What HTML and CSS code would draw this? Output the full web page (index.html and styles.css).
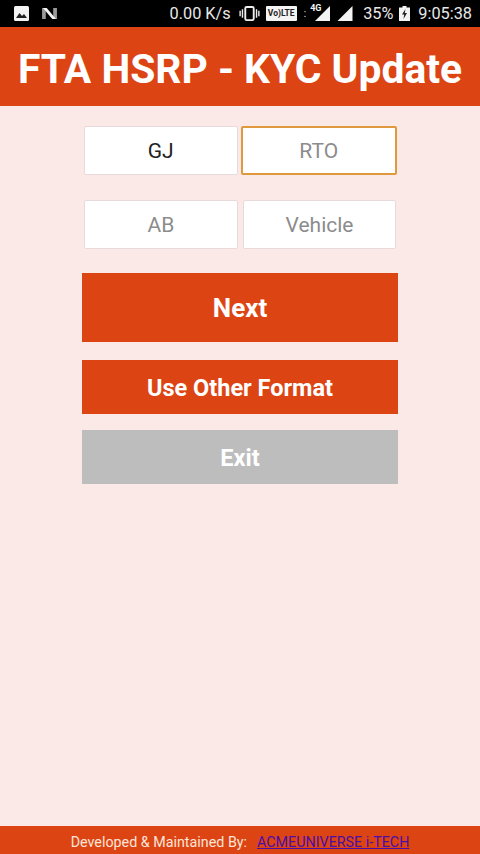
FILE: index.html
```html
<!DOCTYPE html>
<html lang="en">
<head>
<meta charset="utf-8">
<title>FTA HSRP - KYC Update</title>
<link rel="stylesheet" href="styles.css">
</head>
<body>
<div class="status">
  <div class="status-left">
    <svg class="ic-img" viewBox="0 0 15 15"><rect width="15" height="15" rx="1.500" fill="#f4f4f4"/><path d="M2 12l3.500-5 2.500 3 2-2 3 4z" fill="#222"/></svg>
    <svg class="ic-n" viewBox="0 0 16 14"><path d="M0 1h4v12H0zM12 1h4v12h-4z" fill="#9a9a9a"/><path d="M1 1h4l10 12h-4z" fill="#f4f4f4"/></svg>
  </div>
  <div class="status-right">
    <span class="speed">0.00 K/s</span>
    <svg class="ic-vib" viewBox="0 0 22 16"><rect x="6.500" y="1" width="9" height="14" rx="1.500" fill="none" stroke="#eee" stroke-width="2"/><path d="M1 5v6M3.500 3.500v9M18.500 3.500v9M21 5v6" stroke="#eee" stroke-width="1.500"/></svg>
    <span class="volte">Vo<i>)</i>LTE</span>
    <span class="dots">:</span>
    <span class="sig-wrap"><span class="fourg">4G</span><svg class="ic-sig" viewBox="0 0 16 16"><path d="M16 0v16H0z" fill="#f4f4f4"/></svg></span>
    <svg class="ic-sig2" viewBox="0 0 16 16"><path d="M16 0v16H0z" fill="#f4f4f4"/></svg>
    <span class="batt-text">35%</span>
    <svg class="ic-batt" viewBox="0 0 11 15"><path d="M3.500 0h4v1.500H11V15H0V1.500h3.500z" fill="#f4f4f4"/><path d="M6.500 3L3 8.500h2.200L4.500 13l3.500-6H5.800z" fill="#222"/></svg>
    <span class="clock">9:05:38</span>
  </div>
</div>
<header class="appbar">FTA HSRP - KYC Update</header>
<main class="content">
  <div class="row row-first">
    <div class="field field-value">GJ</div>
    <div class="field field-focus">RTO</div>
  </div>
  <div class="row row-second">
    <div class="field field-low">AB</div>
    <div class="field field-low field-narrow">Vehicle</div>
  </div>
  <button class="btn btn-next">Next</button>
  <button class="btn btn-other">Use Other Format</button>
  <button class="btn btn-exit">Exit</button>
</main>
<footer class="footer">
  <span class="dev">Developed &amp; Maintained By:</span>
  <a class="link" href="#">ACMEUNIVERSE i-TECH</a>
</footer>
</body>
</html>
```
FILE: styles.css
```css
* { box-sizing: border-box; }
html, body { margin: 0; padding: 0; }
body {
  width: 480px;
  height: 854px;
  display: flex;
  flex-direction: column;
  background: #fbe9e7;
  font-family: Roboto, "Liberation Sans", sans-serif;
  overflow: hidden;
}
.status {
  height: 27px;
  flex: none;
  background: #000;
  color: #e8e8e8;
  display: flex;
  justify-content: space-between;
  align-items: center;
  padding: 0 8px 0 14px;
  font-size: 16.300px;
}
.status-left { display: flex; align-items: center; gap: 12px; }
.ic-img { width: 15px; height: 15px; }
.ic-n { width: 17px; height: 13px; }
.status-right { display: flex; align-items: center; }
.speed { margin-right: 8px; }
.ic-vib { width: 21px; height: 15px; margin-right: 6px; }
.volte {
  background: #f4f4f4;
  color: #222;
  font-size: 8.500px;
  font-weight: 700;
  width: 31px;
  height: 15px;
  line-height: 15px;
  text-align: center;
  border-radius: 1px;
  white-space: nowrap;
}
.volte i { font-style: normal; }
.dots { font-size: 10px; margin: 0 8px 0 7px; }
.sig-wrap { position: relative; width: 17px; height: 15px; margin-right: 6px; }
.fourg {
  position: absolute;
  left: -4px;
  top: -3px;
  font-size: 9px;
  font-weight: 700;
  color: #f4f4f4;
  line-height: 10px;
}
.ic-sig { width: 17px; height: 15px; display: block; }
.ic-sig2 { width: 16px; height: 15px; margin-right: 10px; }
.batt-text { margin-right: 6px; }
.ic-batt { width: 11px; height: 15px; margin-right: 8px; }
.appbar {
  height: 79px;
  flex: none;
  background: #dd4414;
  color: #fff;
  font-size: 40.800px;
  font-weight: 700;
  line-height: 85px;
  text-align: center;
  white-space: nowrap;
}
.content {
  flex: 1;
  display: flex;
  flex-direction: column;
  padding: 0 82px;
}
.row { display: flex; justify-content: space-between; padding: 0 1px 0 2px; }
.row-first { margin-top: 20px; }
.row-second { margin-top: 25px; }
.field {
  width: 154px;
  height: 49px;
  background: #fff;
  border: 1px solid #e8dada;
  border-radius: 2px;
  color: #8c8c8c;
  font-size: 21px;
  display: flex;
  align-items: center;
  justify-content: center;
}
.field-value { color: #222; }
.field-low { padding-top: 1px; }
.field-focus {
  width: 157px;
  margin-left: 3px;
  border: 2px solid #e0993f;
}
.field-narrow { width: 153px; margin-right: 1px; }
.btn {
  display: block;
  width: 316px;
  border: 0;
  border-radius: 0;
  padding: 1px 0 0;
  background: #dd4414;
  color: #fff;
  font-family: inherit;
  font-weight: 700;
  text-align: center;
}
.btn-next { height: 69px; margin-top: 24px; font-size: 26px; }
.btn-other { height: 54px; margin-top: 18px; font-size: 23.500px; }
.btn-exit { height: 54px; margin-top: 16px; font-size: 23.500px; background: #bdbdbd; }
.footer {
  height: 28px;
  flex: none;
  background: #dd4414;
  color: #fbe4d8;
  font-size: 14.300px;
  display: flex;
  align-items: center;
  justify-content: center;
  gap: 10px;
  padding-top: 4px;
  white-space: nowrap;
}
.link { color: #4a0fa8; text-decoration: underline; }
```
